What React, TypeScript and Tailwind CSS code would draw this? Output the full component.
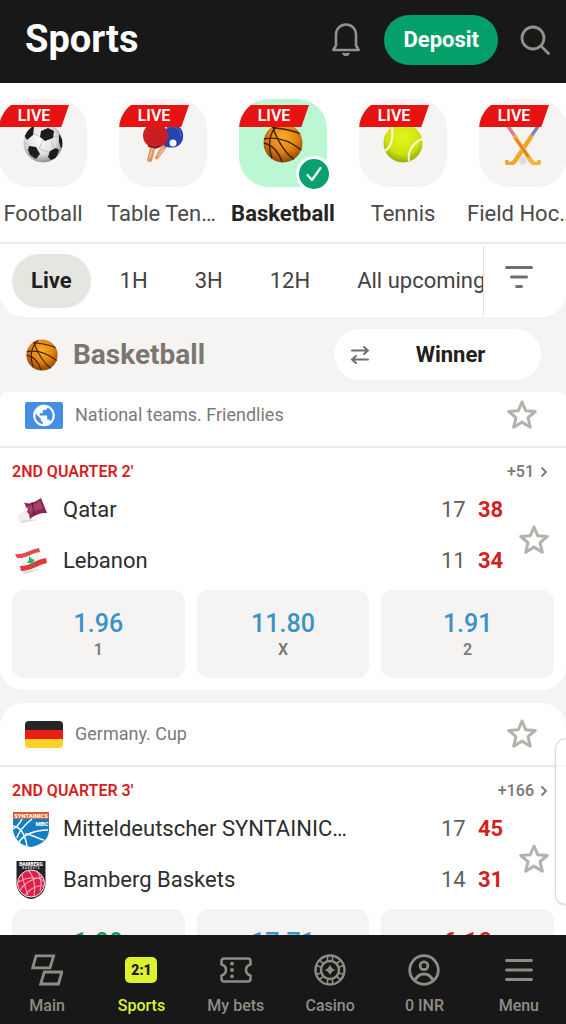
import React from 'react';

function Star() {
  return (
    <svg viewBox="0 0 32 32" className="size-8" fill="none" stroke="#b3b2ad" strokeWidth="3" strokeLinejoin="round">
      <path d="M16 3l3.700 8.700 9.600.8-7.300 6.200 2.300 9.500L16 23.100l-8.300 5.100 2.300-9.500-7.300-6.200 9.600-.8z" />
    </svg>
  );
}

function Basketball({ className }: { className: string }) {
  const id = React.useId();
  return (
    <svg viewBox="0 0 40 40" className={className}>
      <defs>
        <radialGradient id={id} cx="0.5" cy="0.35" r="0.65">
          <stop offset="0" stopColor="#f9ab2c" />
          <stop offset="0.55" stopColor="#e2840f" />
          <stop offset="1" stopColor="#8f4306" />
        </radialGradient>
      </defs>
      <circle cx="20" cy="20" r="19.500" fill={`url(#${id})`} />
      <g fill="none" stroke="#3d2006" strokeWidth="1.400">
        <path d="M9 4.500C20 6 31 7 37 11" />
        <path d="M15 1.500C7 9 4 20 9 35.500" />
        <path d="M1 16C14 13 28 19 38.500 27" />
        <path d="M11 8C16 20 22 30 31 36.500" />
        <path d="M1 20C9 22 16 29 19 39" />
        <path d="M11 3c1 3 0 4 0 6" />
      </g>
    </svg>
  );
}

function Football() {
  return (
    <svg viewBox="0 0 40 40" className="size-10">
      <defs>
        <radialGradient id="football" cx="0.45" cy="0.4" r="0.6">
          <stop offset="0" stopColor="#fff" />
          <stop offset="0.65" stopColor="#dedede" />
          <stop offset="1" stopColor="#8d8d8d" />
        </radialGradient>
        <clipPath id="football-clip"><circle cx="20" cy="20" r="19.500" /></clipPath>
      </defs>
      <circle cx="20" cy="20" r="19.500" fill="url(#football)" />
      <g clipPath="url(#football-clip)">
        <g fill="none" stroke="#b5b5b5" strokeWidth="0.800">
          <path d="M18 14l-8-4M30 14l6-1M17 26l10 4M9 26L2 19M20 17l-4 9M28 17l3 10M12 35l6 4M33 34l-6 5" />
        </g>
        <g fill="#1d1d1f">
          <path d="M18 8l7-3 6 3-1 7-8 3-5-4z" />
          <path d="M6 23l7 1 4 7-4 5-6-4-2-5z" />
          <path d="M27 28l6-3 3 2-3 8-5 2-3-3z" />
          <path d="M11 4l-1 8-6 5-3-5 7-9z" />
          <path d="M36 11l3 5 1 8-2 1-2-6z" />
        </g>
      </g>
    </svg>
  );
}

function TableTennis() {
  return (
    <svg viewBox="0 0 42 42" className="size-[42px]">
      <path d="M13 35l7-12 5 2-9 12c-1 1-4 0-3-2z" fill="#dd9d6d" />
      <path d="M22 24c-3-9 1-20 9-21 8 0 11 7 10 13-1 8-9 12-19 8z" fill="#2743ae" />
      <path d="M25 6c7-4 14 1 14 9" fill="none" stroke="#4161d2" strokeWidth="1.500" />
      <path d="M5 38l4-16 5 2-4 15c-1 2-5 1-5-1z" fill="#d99765" />
      <path d="M7.500 36l4-13M16.500 34l5-8" stroke="#f2c49b" strokeWidth="1.200" />
      <circle cx="13.500" cy="13.500" r="12.500" fill="#c91f22" />
      <path d="M6 24l8 2 4-2" stroke="#7e1719" strokeWidth="1.500" fill="none" />
      <circle cx="31" cy="21" r="3.500" fill="#f7f9ff" />
    </svg>
  );
}

function TennisBall() {
  return (
    <svg viewBox="0 0 40 40" className="size-10">
      <defs>
        <radialGradient id="tennis" cx="0.5" cy="0.35" r="0.65">
          <stop offset="0" stopColor="#e3f521" />
          <stop offset="0.65" stopColor="#cfe30c" />
          <stop offset="1" stopColor="#93aa08" />
        </radialGradient>
      </defs>
      <circle cx="20" cy="20" r="19.500" fill="url(#tennis)" />
      <path d="M9 4c1 9 1 19-7 24" fill="none" stroke="#f6f8d8" strokeWidth="2" />
      <path d="M39 16c-8 3-15 12-13 22" fill="none" stroke="#f6f8d8" strokeWidth="2" />
    </svg>
  );
}

function HockeySticks() {
  return (
    <svg viewBox="0 0 42 44" className="h-11 w-[42px]" fill="none" strokeLinecap="round" strokeWidth="3.400">
      <path d="M39 1L28 17" stroke="#7885b9" />
      <path d="M3 1l11 16" stroke="#d67d9b" />
      <path d="M29 16L13 40c-3 4-8 4-8 1" stroke="#eba829" strokeWidth="4.400" />
      <path d="M13 16l16 24c3 4 8 4 8 1" stroke="#f2b43b" strokeWidth="4.400" />
      <path d="M14 18l12 17" stroke="#dc7126" strokeWidth="1.800" />
      <circle cx="21" cy="39.500" r="4" fill="#dedede" />
    </svg>
  );
}

function QatarFlag() {
  return (
    <svg viewBox="0 0 38 38" className="size-[38px]">
      <path d="M6 29l10-1 9 1-15 3z" fill="#dcdadb" />
      <path d="M6 23c5 1 7-3 7-11l7 16c-4 0-7 3-13 2z" fill="#f0eeef" />
      <path d="M12 11c4 3 10 1 17-4l6 15c-6 0-11 1-17 6l-1-5-2-2 1-3-2-2z" fill="#8c2454" />
      <path d="M15 15c4 0 9-1 13-6l3 9c-4 0-9 2-13 5z" fill="#b64e7a" opacity=".65" />
      <path d="M20 11l2 13" stroke="#671640" />
    </svg>
  );
}

function LebanonFlag() {
  return (
    <svg viewBox="0 0 38 38" className="size-[38px]">
      <path d="M9 30l22-4-17 6z" fill="#ddd" />
      <path d="M4 15c10-1 12-6 23-6l6 10c-10 0-12 4-25 8z" fill="#f5f4f2" />
      <path d="M3 12c9 1 14-4 24-6l1 4c-9 1-14 7-23 6z" fill="#df4b46" />
      <path d="M8 24c11 0 16-7 26-8l1 5c-9 2-16 8-26 8z" fill="#dc3d3a" />
      <path d="M17 14l3 3 3 1-2 2 1 3-4-2-3 0 2-3z" fill="#27b36c" />
    </svg>
  );
}

function MitteldeutscherLogo() {
  return (
    <svg viewBox="0 0 38 38" className="size-[38px]">
      <path d="M1 9h36v12c-1 10-9 14-18 16C9 36 2 29 1 20z" fill="#147fc2" />
      <path d="M1 2h36v7H1z" fill="#dc5a2e" />
      <g fill="none" stroke="#fff" strokeWidth="1.500">
        <path d="M1 16c8 1 12 8 14 20M10 9C7 15 3 18 1 19M20 9C12 15 6 23 5 28M36 20c-12 0-24 4-29 12M13 24c6 0 14 5 19 6" />
      </g>
      <text x="19" y="7.600" textAnchor="middle" fontFamily="Roboto, sans-serif" fontWeight="900" fontSize="5.800" fill="#fff">SYNTAINICS</text>
      <text x="30" y="16" textAnchor="middle" fontFamily="Roboto, sans-serif" fontWeight="900" fontSize="6" fill="#fff">MBC</text>
    </svg>
  );
}

function BambergLogo() {
  return (
    <svg viewBox="0 0 38 38" className="size-[38px]">
      <path d="M4.500 0h29v22c0 9-6 15-14.500 16C11 37 4.500 31 4.500 22z" fill="#252326" />
      <circle cx="19" cy="22.500" r="13.500" fill="#dc2149" stroke="#fff" strokeWidth="0.900" />
      <g fill="none" stroke="#f5aab9" strokeWidth="1.100">
        <path d="M6 21c9-5 19-6 26-1M8 29c6-9 15-12 23-13M13 34c7-8 13-10 19-9M16 9c6 6 8 17 6 26M25 10c4 5 5 12 3 20M10 13c1 7 3 13 6 21" />
      </g>
      <text x="19" y="5" textAnchor="middle" fontFamily="Roboto, sans-serif" fontWeight="900" fontSize="5" fill="#fff">BAMBERG</text>
      <text x="19" y="8.300" textAnchor="middle" fontFamily="Roboto, sans-serif" fontWeight="700" fontSize="3" fill="#ccc">B A S K E T S</text>
    </svg>
  );
}

function WorldFlag() {
  return (
    <svg viewBox="0 0 38 27" className="h-[27px] w-[38px]">
      <rect width="38" height="27" rx="2" fill="#448fe4" />
      <g transform="translate(6 .5) scale(1.083)">
        <path fill="#fff" d="M12 2C6.480 2 2 6.480 2 12s4.480 10 10 10 10-4.480 10-10S17.520 2 12 2zm-1 17.930c-3.950-.49-7-3.850-7-7.930 0-.62.08-1.210.21-1.790L9 15v1c0 1.100.9 2 2 2v1.930zm6.900-2.540c-.26-.81-1-1.390-1.900-1.390h-1v-3c0-.55-.45-1-1-1H8v-2h2c.55 0 1-.45 1-1V7h2c1.100 0 2-.9 2-2v-.41c2.930 1.190 5 4.060 5 7.410 0 2.080-.8 3.970-2.100 5.390z" />
      </g>
    </svg>
  );
}

function GermanFlag() {
  return (
    <svg viewBox="0 0 38 27" className="h-[27px] w-[38px] rounded-sm">
      <path d="M0 0h38v9H0z" fill="#252525" />
      <path d="M0 9h38v9H0z" fill="#e91c16" />
      <path d="M0 18h38v9H0z" fill="#fbd02c" />
    </svg>
  );
}

const sports = [
  { name: 'Football', icon: <Football /> },
  { name: 'Table Tennis', icon: <TableTennis /> },
  { name: 'Basketball', icon: <Basketball className="size-10" />, active: true },
  { name: 'Tennis', icon: <TennisBall /> },
  { name: 'Field Hockey', icon: <HockeySticks /> },
];

function SportItem({ name, icon, active }: { name: string; icon: React.ReactNode; active?: boolean }) {
  return (
    <button className="flex w-28 shrink-0 flex-col items-center gap-3">
      <span className="relative block">
        <span className={`relative flex size-[88px] items-center justify-center overflow-hidden rounded-[30px] ${active ? 'bg-[#bbf7d3]' : 'bg-[#f5f4f2]'}`}>
          {icon}
          <span className="absolute top-1.5 left-0 h-[22px] w-[70px] bg-[#e91212] text-center text-base leading-[22px] font-semibold text-white [clip-path:polygon(0_0,100%_0,89%_100%,0_100%)]">
            LIVE
          </span>
        </span>
        {active && (
          <span className="absolute -right-[5px] -bottom-[5px] flex size-9 items-center justify-center rounded-full border-[3px] border-white bg-[#08a06b]">
            <svg viewBox="0 0 20 20" className="size-5" fill="none" stroke="#fff" strokeWidth="2.200" strokeLinecap="round" strokeLinejoin="round">
              <path d="M3.500 11l4.500 5 8.500-12" />
            </svg>
          </span>
        )}
      </span>
      <span className={`w-full truncate text-[22px] leading-[30px] ${active ? 'font-bold text-[#242424]' : 'text-[#4a4a4a]'}`}>{name}</span>
    </button>
  );
}

type Team = { name: string; logo: React.ReactNode; quarter: number; total: number };
type Odd = { value: string; label: string; tone: string };
type MatchProps = { league: string; flag: React.ReactNode; status: string; more: string; teams: Team[]; odds: Odd[]; tucked?: boolean };

function MatchCard({ league, flag, status, more, teams, odds, tucked }: MatchProps) {
  return (
    <section className={`shrink-0 bg-white pb-3 ${tucked ? 'rounded-t-lg rounded-b-3xl' : 'rounded-3xl'}`}>
      <div className={`flex items-center border-b-2 border-[#ebebeb] pr-7 pl-[25px] ${tucked ? 'h-14 pb-2' : 'h-16'}`}>
        {flag}
        <h3 className="ml-3 flex-1 text-lg text-[#7b7a77]">{league}</h3>
        <button aria-label={`Add ${league} to favourites`}><Star /></button>
      </div>
      <div className="flex items-center justify-between pt-3 pr-[18px] pl-3 text-base leading-6">
        <span className="font-semibold text-[#d51f1f]">{status}</span>
        <a href="#markets" className="flex items-center gap-1.5 font-medium text-[#777672]">
          {more}
          <svg viewBox="0 0 8 12" className="h-3 w-2" fill="none" stroke="currentColor" strokeWidth="1.800"><path d="M1.500 1.500L6 6l-4.500 4.500" /></svg>
        </a>
      </div>
      <div className="flex items-center pr-4 pl-3">
        <ul className="min-w-0 flex-1">
          {teams.map((t) => (
            <li key={t.name} className="flex h-[51px] items-center text-[22px]">
              {t.logo}
              <span className="ml-[13px] w-[285px] truncate text-[#2d2d2d]">{t.name}</span>
              <span className="ml-auto w-[37px] text-[#5f5f5f]">{t.quarter}</span>
              <span className="w-10 font-bold text-[#d51f1f]">{t.total}</span>
            </li>
          ))}
        </ul>
        <button aria-label="Add match to favourites" className="pt-2.5"><Star /></button>
      </div>
      <div className="mt-1 grid grid-cols-3 gap-3 px-3">
        {odds.map((o) => (
          <button key={o.label} className="flex h-[88px] flex-col items-center justify-center rounded-xl bg-[#f5f4f2]">
            <span className={`text-[25px] leading-8 font-medium ${o.tone}`}>{o.value}</span>
            <span className="text-base leading-5 font-semibold text-[#7b7a77]">{o.label}</span>
          </button>
        ))}
      </div>
    </section>
  );
}

function CasinoIcon() {
  return (
    <svg viewBox="0 0 32 32" className="size-8" fill="none" stroke="currentColor" strokeWidth="2.400">
      <circle cx="16" cy="16" r="14.500" />
      <circle cx="16" cy="16" r="9" />
      <path d="M13.500 2v5.500M18.500 2v5.500M13.500 24.500V30M18.500 24.500V30M2.500 11.500l5.300 2M5.500 6.500l4.500 3.500M29.500 11.500l-5.300 2M26.500 6.500L22 10M2.500 20.500l5.300-2M5.500 25.500l4.500-3.500M29.500 20.500l-5.300-2M26.500 25.500L22 22" strokeWidth="1.600" />
      <path d="M16 10.500q1.300 4.200 5.500 5.500-4.200 1.300-5.500 5.500-1.300-4.200-5.500-5.500 4.200-1.300 5.500-5.500z" fill="currentColor" stroke="none" />
    </svg>
  );
}

const tabs = [
  {
    label: 'Main',
    icon: (
      <svg viewBox="0 0 32 32" className="size-8" fill="none" stroke="currentColor" strokeWidth="2.800">
        <path d="M5 1.900h17.600l-3.600 12H1.700zM13.300 18H31l-3.600 12H9.700z" />
      </svg>
    ),
  },
  {
    label: 'Sports',
    active: true,
    icon: <span className="flex h-[26px] w-8 items-center justify-center rounded-[5px] bg-[#dff02f] text-sm font-black text-[#181818]">2:1</span>,
  },
  {
    label: 'My bets',
    icon: (
      <svg viewBox="0 0 32 32" className="size-8" fill="none" stroke="currentColor" strokeWidth="2.600" strokeLinejoin="round">
        <path d="M4 4.500h24a2.500 2.500 0 0 1 2.500 2.500v3.500c-3 .8-4.500 2.800-4.500 5.500s1.500 4.700 4.500 5.500V25a2.500 2.500 0 0 1-2.500 2.500H4A2.500 2.500 0 0 1 1.500 25v-3.500C4.500 20.700 6 18.700 6 16s-1.500-4.700-4.500-5.500V7A2.500 2.500 0 0 1 4 4.500z" />
        <g fill="currentColor" stroke="none"><circle cx="12" cy="9.700" r="1.900" /><circle cx="12" cy="16" r="1.900" /><circle cx="12" cy="22.300" r="1.900" /></g>
      </svg>
    ),
  },
  { label: 'Casino', icon: <CasinoIcon /> },
  {
    label: '0 INR',
    icon: (
      <svg viewBox="0 0 32 32" className="size-8" fill="none" stroke="currentColor" strokeWidth="2.800">
        <circle cx="16" cy="16" r="14.300" />
        <circle cx="16" cy="11.800" r="3.900" />
        <path d="M7 26.500C9 21.800 12 20 16 20s7 1.800 9 6.500" />
      </svg>
    ),
  },
  {
    label: 'Menu',
    icon: (
      <svg viewBox="0 0 32 32" className="size-8" fill="none" stroke="currentColor" strokeWidth="2.800" strokeLinecap="round">
        <path d="M3.500 6.500h25M3.500 16h25M3.500 25.500h25" />
      </svg>
    ),
  },
];

export default function App() {
  return (
    <div className="relative flex h-screen flex-col overflow-hidden bg-[#f5f4f2] font-[Roboto,sans-serif]">
      <header className="flex h-[83px] shrink-0 items-center bg-[#181818] pr-4 pb-1 pl-[25px]">
        <h1 className="flex-1 text-[38px] font-bold text-white">Sports</h1>
        <button aria-label="Notifications" className="text-[#949188]">
          <svg viewBox="0 0 30 36" className="h-9 w-[30px]" fill="none" stroke="currentColor" strokeWidth="2.600" strokeLinejoin="round">
            <path d="M2.300 28l2.700-4.500V12.500a10 10 0 0 1 20 0v11l2.700 4.500z" />
            <path d="M11 31h8c-.6 2.200-2 3.300-4 3.300s-3.400-1.100-4-3.300z" fill="currentColor" stroke="none" />
          </svg>
        </button>
        <button className="mr-[22px] ml-[23px] h-[50px] rounded-full bg-[#059f6a] px-[19px] text-[22px] font-bold text-white">Deposit</button>
        <button aria-label="Search" className="text-[#949188]">
          <svg viewBox="0 0 30 30" className="size-[30px]" fill="none" stroke="currentColor" strokeWidth="2.800" strokeLinecap="round">
            <circle cx="13" cy="13" r="11" />
            <path d="M21 21l7.500 7.500" />
          </svg>
        </button>
      </header>

      <main className="flex min-h-0 flex-1 flex-col overflow-hidden">
        <div className="flex h-[159px] shrink-0 justify-center gap-2 overflow-hidden bg-white pt-4">
          {sports.map((s) => <SportItem key={s.name} {...s} />)}
        </div>

        <div className="flex h-[75px] shrink-0 rounded-b-3xl bg-white">
          <div className="flex min-w-0 flex-1 items-center gap-[11px] overflow-hidden border-t-2 border-[#ebebeb] pl-3 text-[22px] whitespace-nowrap text-[#424242]">
            <button className="h-[54px] shrink-0 rounded-full bg-[#e6e6e0] px-[19px] font-bold text-[#202020]">Live</button>
            <button className="shrink-0 px-[18px]">1H</button>
            <button className="shrink-0 px-[18px]">3H</button>
            <button className="shrink-0 px-[18px]">12H</button>
            <button className="shrink-0 px-[18px]">All upcoming</button>
          </div>
          <div className="flex border-t-2 border-[#ebebeb] py-0.5">
            <button aria-label="Filters" className="flex w-[83px] items-center border-l border-[#dfdfdf] pb-2 pl-5">
              <svg viewBox="0 0 30 26" className="h-[26px] w-[30px]" fill="none" stroke="#706f6b" strokeWidth="3" strokeLinecap="round">
                <path d="M2.500 3.500h25M7.500 13h15M12.500 22.500h5" />
              </svg>
            </button>
          </div>
        </div>

        <div className="flex h-[75px] shrink-0 items-center pr-[25px] pl-[26px]">
          <Basketball className="size-8" />
          <h2 className="ml-[15px] flex-1 text-[28px] font-bold text-[#7b7770]">Basketball</h2>
          <button className="flex h-[51px] w-[207px] items-center rounded-full bg-white pr-2.5 pl-4">
            <svg viewBox="0 0 20 20" className="size-5" fill="none" stroke="#706f6b" strokeWidth="2" strokeLinecap="round" strokeLinejoin="round">
              <path d="M2 5.500h16M14 2l4 3.500L14 9M18 14.500H2M6 11l-4 3.500L6 18" />
            </svg>
            <span className="flex-1 text-[22px] font-bold text-[#202020]">Winner</span>
          </button>
        </div>

        <div className="flex flex-col gap-[13px]">
          <MatchCard
            tucked
            league="National teams. Friendlies"
            flag={<WorldFlag />}
            status="2ND QUARTER 2'"
            more="+51"
            teams={[
              { name: 'Qatar', logo: <QatarFlag />, quarter: 17, total: 38 },
              { name: 'Lebanon', logo: <LebanonFlag />, quarter: 11, total: 34 },
            ]}
            odds={[
              { value: '1.96', label: '1', tone: 'text-[#3b91c8]' },
              { value: '11.80', label: 'X', tone: 'text-[#3b91c8]' },
              { value: '1.91', label: '2', tone: 'text-[#3b91c8]' },
            ]}
          />
          <MatchCard
            league="Germany. Cup"
            flag={<GermanFlag />}
            status="2ND QUARTER 3'"
            more="+166"
            teams={[
              { name: 'Mitteldeutscher SYNTAINICS MBC', logo: <MitteldeutscherLogo />, quarter: 17, total: 45 },
              { name: 'Bamberg Baskets', logo: <BambergLogo />, quarter: 14, total: 31 },
            ]}
            odds={[
              { value: '1.09', label: '1', tone: 'text-[#08a05f]' },
              { value: '17.71', label: 'X', tone: 'text-[#3b91c8]' },
              { value: '6.10', label: '2', tone: 'text-[#d51f1f]' },
            ]}
          />
        </div>
      </main>

      <aside aria-label="Side panel" className="absolute right-0 bottom-[119px] h-[167px] w-[11px] rounded-l-xl border border-r-0 border-[#dcdcdc] bg-white/60 shadow-sm" />

      <nav className="grid h-[89px] shrink-0 grid-cols-6 bg-[#181818]">
        {tabs.map((t) => (
          <a key={t.label} href={`#${t.label}`} className={`flex flex-col items-center pt-[19px] text-base font-medium ${t.active ? 'text-[#dff02f]' : 'text-[#8f8c84]'}`}>
            <span className="flex h-8 items-center">{t.icon}</span>
            <span className="mt-2 leading-6">{t.label}</span>
          </a>
        ))}
      </nav>
    </div>
  );
}
